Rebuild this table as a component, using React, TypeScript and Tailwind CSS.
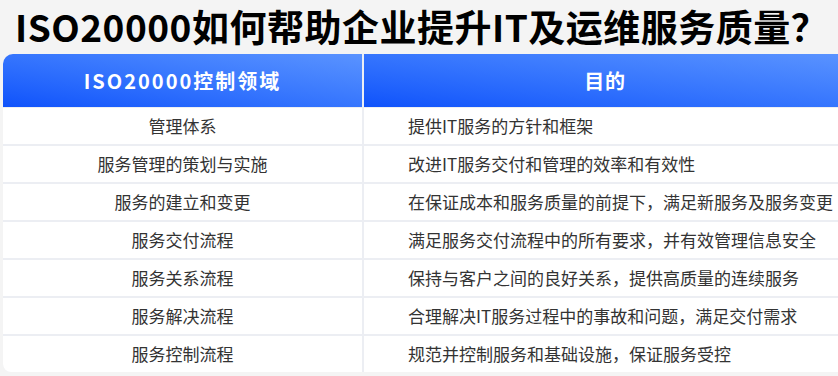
const rows = [
  ["管理体系", "提供IT服务的方针和框架"],
  ["服务管理的策划与实施", "改进IT服务交付和管理的效率和有效性"],
  ["服务的建立和变更", "在保证成本和服务质量的前提下，满足新服务及服务变更"],
  ["服务交付流程", "满足服务交付流程中的所有要求，并有效管理信息安全"],
  ["服务关系流程", "保持与客户之间的良好关系，提供高质量的连续服务"],
  ["服务解决流程", "合理解决IT服务过程中的事故和问题，满足交付需求"],
  ["服务控制流程", "规范并控制服务和基础设施，保证服务受控"],
];

export default function App() {
  return (
    <div
      className="w-[838px] h-[376px] overflow-hidden bg-[#f4f4f4]"
      style={{ fontFamily: '"Noto Sans CJK SC", "Noto Sans", sans-serif' }}
    >
      <div className="h-[54px] pt-[5px] flex">
        <h1 className="shrink-0 ml-[15px] leading-[42px] text-[37px] tracking-[0.5px] font-bold text-black whitespace-nowrap">
          ISO20000如何帮助企业提升IT及运维服务质量？
        </h1>
      </div>
      <div className="ml-[3px] w-[843px] rounded-tl-[10px] rounded-bl-[8px] overflow-hidden bg-[#eceef3]">
        <div className="grid grid-cols-[359px_482px] gap-x-[2px]">
          <div className="h-[53px] flex items-center justify-center bg-gradient-to-tr from-[#0f52fb] to-[#5a93ff] text-white text-[20px] font-bold tracking-[0.1em]">
            ISO20000控制领域
          </div>
          <div className="h-[53px] flex items-center justify-center bg-gradient-to-tr from-[#0f52fb] to-[#5a93ff] text-white text-[20px] font-bold tracking-[0.04em]">
            目的
          </div>
        </div>
        <div className="mt-px flex flex-col gap-[2px]">
          {rows.map(([area, goal]) => (
            <div key={area} className="grid grid-cols-[359px_482px] gap-x-[2px]">
              <div className="h-[36px] flex items-center justify-center bg-white text-[17px] text-[#333]">
                {area}
              </div>
              <div className="h-[36px] flex items-center pl-[44px] bg-white text-[17px] text-[#333] whitespace-nowrap">
                {goal}
              </div>
            </div>
          ))}
        </div>
      </div>
    </div>
  );
}
